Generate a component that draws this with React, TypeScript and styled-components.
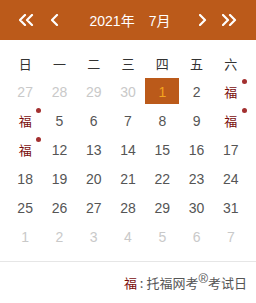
import React from "react";
import styled, { createGlobalStyle } from "styled-components";

const Global = createGlobalStyle`
  html, body { margin: 0; padding: 0; background: #fff; }
  body { font-family: "Liberation Sans", Arial, "Noto Sans CJK SC", sans-serif; }
`;

const ACCENT = "#bb5a1a";

const Wrap = styled.div`
  width: 256px;
  height: 303px;
  background: #fff;
  display: flex;
  flex-direction: column;
`;

const Header = styled.div`
  height: 40px;
  background: ${ACCENT};
  display: flex;
  align-items: center;
  padding: 0 18px 0 19px;
  color: #fff;
`;

const NavBtn = styled.button<{ $gap?: number }>`
  background: none;
  border: 0;
  padding: 0;
  margin: 0 0 0 ${(p) => p.$gap ?? 0}px;
  display: flex;
  align-items: center;
  cursor: pointer;
  line-height: 0;
`;

const Title = styled.div`
  flex: 1;
  display: flex;
  justify-content: center;
  gap: 14px;
  font-size: 14px;
  color: #fff;
  font-family: "Liberation Sans", Arial, "Noto Sans CJK SC", sans-serif;
  padding-left: 2px;
`;

const Body = styled.div`
  padding: 9px 8px 10px;
  border-bottom: 1px solid #e6e6e6;
`;

const Grid = styled.div`
  display: grid;
  grid-template-columns: repeat(7, 1fr);
`;

const WeekCell = styled.div`
  height: 28px;
  display: flex;
  align-items: center;
  justify-content: center;
  font-size: 13px;
  color: #333;
  font-family: "Noto Sans CJK SC", sans-serif;
`;

const DayCell = styled.div<{ $muted?: boolean; $selected?: boolean; $fu?: boolean }>`
  position: relative;
  height: 29px;
  display: flex;
  align-items: center;
  justify-content: center;
  font-size: 14px;
  color: ${(p) => (p.$selected ? "#f3a51f" : p.$muted ? "#c9c9c9" : p.$fu ? "#7a0c0c" : "#555")};
  ${(p) => (p.$fu ? `font-family: "Noto Sans CJK SC", sans-serif; font-size: 13px;` : "")}
  &::before {
    content: "";
    position: absolute;
    left: 0;
    right: 0;
    top: 1px;
    height: 26px;
    background: ${(p) => (p.$selected ? ACCENT : "transparent")};
  }
`;

const DayText = styled.span`
  position: relative;
`;

const Dot = styled.span`
  position: absolute;
  left: calc(50% + 11px);
  top: 2px;
  width: 5px;
  height: 5px;
  border-radius: 50%;
  background: #a33030;
`;

const Footer = styled.div`
  flex: 1;
  display: flex;
  align-items: center;
  justify-content: flex-end;
  padding-right: 9px;
`;

const FooterText = styled.span`
  font-size: 13px;
  color: #555;
  font-family: "Noto Sans CJK SC", sans-serif;
  white-space: pre;
`;

const FuMark = styled.span`
  color: #7a0c0c;
`;

const Sup = styled.sup`
  font-size: 13px;
  font-family: "Liberation Sans", Arial, sans-serif;
  line-height: 0;
  vertical-align: 5px;
`;

const Chevron = ({ dir, double }: { dir: "l" | "r"; double?: boolean }) => {
  const w = double ? 16 : 8;
  const single = (x: number) =>
    dir === "l" ? `M${x + 6} 1 L${x + 1} 6 L${x + 6} 11` : `M${x + 1} 1 L${x + 6} 6 L${x + 1} 11`;
  return (
    <svg width={w} height={12} viewBox={`0 0 ${w} 12`}>
      <path
        d={double ? `${single(0)} ${single(7)}` : single(0)}
        fill="none"
        stroke="#fff"
        strokeWidth={2.2}
        strokeLinecap="round"
        strokeLinejoin="round"
      />
    </svg>
  );
};

type Day = { t: string; muted?: boolean; selected?: boolean; fu?: boolean; dot?: boolean };

const weeks = ["日", "一", "二", "三", "四", "五", "六"];

const days: Day[] = [
  { t: "27", muted: true },
  { t: "28", muted: true },
  { t: "29", muted: true },
  { t: "30", muted: true },
  { t: "1", selected: true },
  { t: "2" },
  { t: "福", fu: true, dot: true },
  { t: "福", fu: true, dot: true },
  { t: "5" },
  { t: "6" },
  { t: "7" },
  { t: "8" },
  { t: "9" },
  { t: "福", fu: true, dot: true },
  { t: "福", fu: true, dot: true },
  { t: "12" },
  { t: "13" },
  { t: "14" },
  { t: "15" },
  { t: "16" },
  { t: "17" },
  { t: "18" },
  { t: "19" },
  { t: "20" },
  { t: "21" },
  { t: "22" },
  { t: "23" },
  { t: "24" },
  { t: "25" },
  { t: "26" },
  { t: "27" },
  { t: "28" },
  { t: "29" },
  { t: "30" },
  { t: "31" },
  { t: "1", muted: true },
  { t: "2", muted: true },
  { t: "3", muted: true },
  { t: "4", muted: true },
  { t: "5", muted: true },
  { t: "6", muted: true },
  { t: "7", muted: true },
];

export default function App() {
  return (
    <Wrap>
      <Global />
      <Header>
        <NavBtn aria-label="prev year">
          <Chevron dir="l" double />
        </NavBtn>
        <NavBtn $gap={16} aria-label="prev month">
          <Chevron dir="l" />
        </NavBtn>
        <Title>
          <span>2021年</span>
          <span>7月</span>
        </Title>
        <NavBtn aria-label="next month">
          <Chevron dir="r" />
        </NavBtn>
        <NavBtn $gap={15} aria-label="next year">
          <Chevron dir="r" double />
        </NavBtn>
      </Header>
      <Body>
        <Grid>
          {weeks.map((w) => (
            <WeekCell key={w}>{w}</WeekCell>
          ))}
          {days.map((d, i) => (
            <DayCell key={i} $muted={d.muted} $selected={d.selected} $fu={d.fu}>
              <DayText>{d.t}</DayText>
              {d.dot && <Dot />}
            </DayCell>
          ))}
        </Grid>
      </Body>
      <Footer>
        <FooterText>
          <FuMark>福</FuMark>
          {" : 托福网考"}
          <Sup>®</Sup>
          {"考试日"}
        </FooterText>
      </Footer>
    </Wrap>
  );
}
